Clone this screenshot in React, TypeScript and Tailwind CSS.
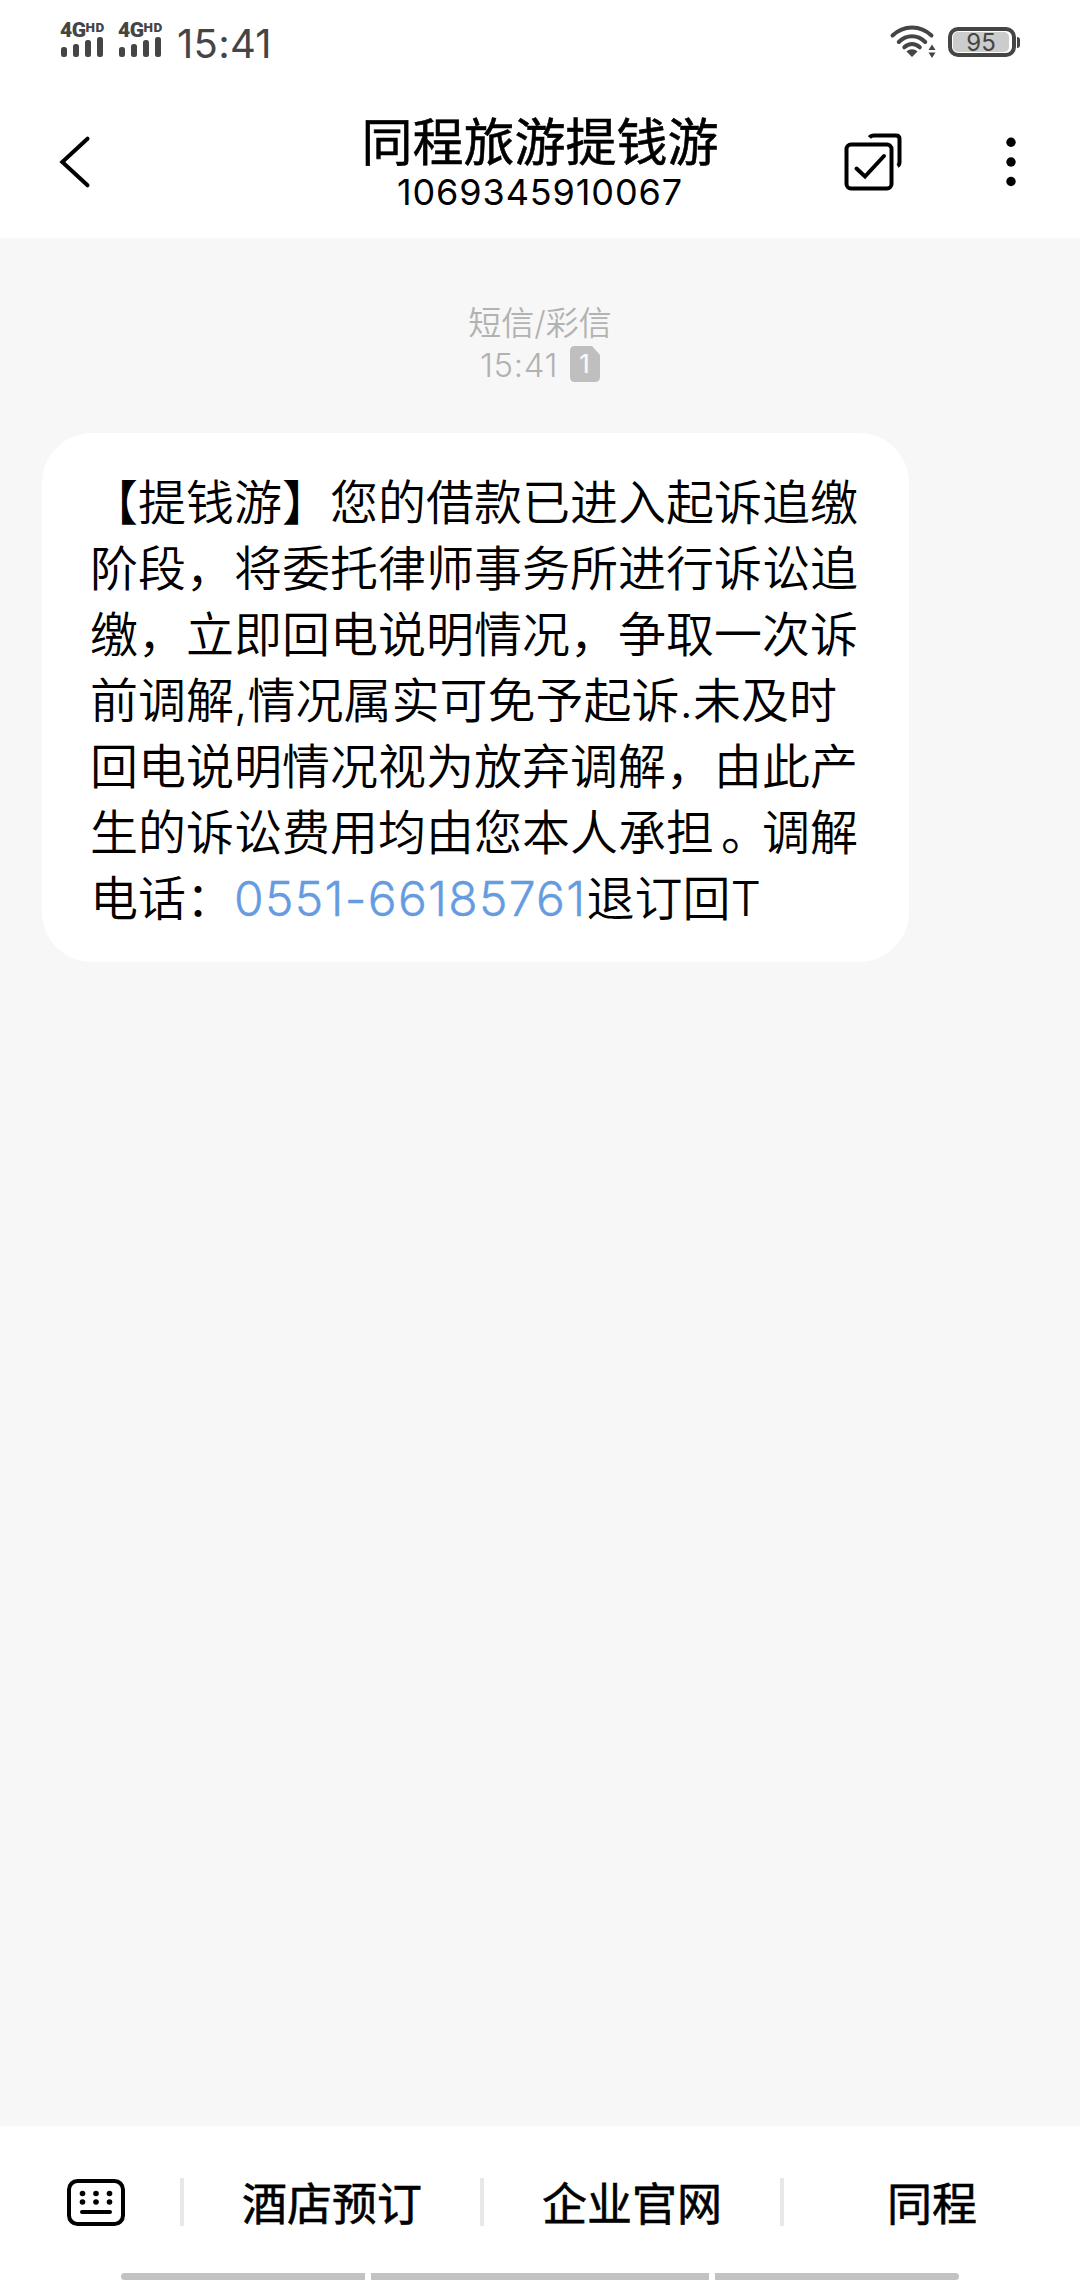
const FONT = "font-['Inter','Noto_Sans_CJK_SC',sans-serif]";

function Signal() {
  return (
    <div className="h-[38px] w-[46px] text-[#454545]">
      <div className="flex h-[17px] items-start whitespace-nowrap font-['Roboto',sans-serif] font-black leading-none">
        <span className="text-[21px] leading-[20px] tracking-[-0.5px]">4G</span>
        <span className="text-[13.5px] leading-[14px] tracking-[0.5px]">HD</span>
      </div>
      <div className="flex h-[20px] items-end gap-[6px] pl-px">
        <i className="h-[10px] w-[6px] rounded-[2.5px] bg-[#454545]" />
        <i className="h-[13px] w-[6px] rounded-[2.5px] bg-[#454545]" />
        <i className="h-[17px] w-[6px] rounded-[2.5px] bg-[#454545]" />
        <i className="h-[20px] w-[6px] rounded-[2.5px] bg-[#454545]" />
      </div>
    </div>
  );
}

function Wifi() {
  return (
    <svg width="48" height="36" viewBox="0 0 48 36" fill="none" stroke="#454545" strokeWidth="4" strokeLinecap="round">
      <path d="M3.5 11.5C14.5 .7 31.500 .7 42.500 11.500" />
      <path d="M9.800 18C17.500 10.300 28.500 10.300 36.200 18" />
      <path d="M15.300 23.300C20 19 26 19 30.800 23.300" />
      <path d="M17.500 27.500C20.500 24.600 25.500 24.600 28.500 27.500L23 33Z" fill="#454545" stroke="none" />
      <path d="M39.500 26L43 20.500L46.500 26ZM39.500 28.500L43 34L46.500 28.500Z" fill="#454545" stroke="none" />
    </svg>
  );
}

function Battery() {
  return (
    <div className="flex items-center">
      <div className="flex h-[30px] w-[68px] items-center rounded-[10px] border-4 border-[#454545] pl-px">
        <div className="flex h-[20px] w-[56px] items-center justify-center rounded-[5px] bg-[#cccccc] pt-px text-[24px] leading-none text-[#454545]">
          95
        </div>
      </div>
      <div className="ml-px h-[11px] w-[3px] rounded-r-[3px] bg-[#454545]" />
    </div>
  );
}

function Header() {
  return (
    <header className="h-[238px] bg-white text-black">
      <div className="flex h-[86px] items-start">
        <div className="ml-[60px] mt-[20px] flex gap-[12px]">
          <Signal />
          <Signal />
        </div>
        <span className="ml-[13px] mt-[20px] text-[40px] font-normal leading-[48px] tracking-[0.3px] text-[#454545]">15:41</span>
        <div className="ml-auto mr-[60px] mt-[24px] flex">
          <Wifi />
          <div className="ml-[11px] mt-[3px]">
            <Battery />
          </div>
        </div>
      </div>
      <div className="grid h-[152px] grid-cols-[360px_360px_360px]">
        <svg width="200" height="152" viewBox="0 86 200 152" fill="none" stroke="black" strokeWidth="4" strokeLinecap="round">
          <path d="M87.500 138.700L62.300 162L87.500 185.300" />
        </svg>
        <div className="flex flex-col items-center whitespace-nowrap">
          <h1 className="mt-[24px] text-[51px] font-normal leading-[66px] [-webkit-text-stroke:0.6px_black]">同程旅游提钱游</h1>
          <p className="-mt-[4px] text-[36px] leading-[40px] tracking-[0.9px]">1069345910067</p>
        </div>
        <svg width="360" height="152" viewBox="720 86 360 152" fill="none" stroke="black" strokeWidth="4">
          <rect x="846.500" y="144.500" width="45" height="44" rx="4.500" />
          <path d="M869.500 137.500Q871 135.500 874 135.500H896Q899.500 135.500 899.500 139V162Q899.500 165 897.500 166" />
          <path d="M856.500 168.500L865 176.500L884 156" strokeLinecap="round" />
          <g fill="black" stroke="none">
            <circle cx="1011" cy="142.300" r="4.700" />
            <circle cx="1011" cy="162" r="4.700" />
            <circle cx="1011" cy="181.500" r="4.700" />
          </g>
        </svg>
      </div>
    </header>
  );
}

const LINES = [
  "【提钱游】您的借款已进入起诉追缴",
  "阶段，将委托律师事务所进行诉讼追",
  "缴，立即回电说明情况，争取一次诉",
  "前调解,情况属实可免予起诉.未及时",
  "回电说明情况视为放弃调解，由此产",
];

function Bubble() {
  return (
    <div className="ml-[42px] mt-[50px] h-[529px] w-[867px] rounded-[50px] bg-white pl-[48px] pt-[37px] text-[48px] font-[350] leading-[66px] text-black">
      {LINES.map((line) => (
        <p key={line} className="whitespace-nowrap">
          {line}
        </p>
      ))}
      <p className="whitespace-nowrap">
        生的诉讼费用均由您本人承担
        <span className="ml-[7px] mr-[17px] [font-feature-settings:'halt']">。</span>
        调解
      </p>
      <p className="whitespace-nowrap">
        电话：<span className="tracking-[1.3px] text-[#659be0] [-webkit-text-stroke:0.4px_#659be0]">0551-66185761</span>退订回T
      </p>
    </div>
  );
}

function Keyboard() {
  return (
    <svg width="60" height="48" viewBox="0 0 60 48" fill="none" stroke="black" strokeWidth="4">
      <rect x="3" y="3" width="54" height="43" rx="8.500" />
      <path d="M16 34H44" strokeLinecap="round" />
      <g fill="black" stroke="none">
        <circle cx="16.500" cy="15.500" r="2.800" />
        <circle cx="30" cy="15.500" r="2.800" />
        <circle cx="43.500" cy="15.500" r="2.800" />
        <circle cx="16.500" cy="24" r="2.800" />
        <circle cx="30" cy="24" r="2.800" />
        <circle cx="43.500" cy="24" r="2.800" />
      </g>
    </svg>
  );
}

function Footer() {
  return (
    <footer className="flex h-[154px] flex-col justify-between bg-white">
      <div className="mt-[52px] flex h-[48px] items-center text-[45px] font-normal leading-[54px] text-black [-webkit-text-stroke:0.6px_black]">
        <div className="flex w-[180px] pl-[66px]">
          <Keyboard />
        </div>
        {["酒店预订", "企业官网", "同程"].map((label) => (
          <div key={label} className="flex h-[48px] w-[300px] border-l-4 border-[#e8e8e8]">
            <span className="flex-1 text-center">{label}</span>
          </div>
        ))}
      </div>
      <div className="flex h-[7px] gap-[6px] pl-[121px]">
        <div className="w-[244px] rounded-l-full bg-[#c2c2c2]" />
        <div className="w-[338px] bg-[#c2c2c2]" />
        <div className="w-[244px] rounded-r-full bg-[#c2c2c2]" />
      </div>
    </footer>
  );
}

export default function App() {
  return (
    <div lang="zh-CN" className={"flex h-[2280px] w-[1080px] flex-col overflow-hidden bg-[#f7f7f7] " + FONT}>
      <Header />
      <main className="flex-1">
        <div className="flex flex-col items-center pt-[64px] text-[33px] font-[350] text-[#b2b2b2]">
          <p className="leading-[42px]">短信/彩信</p>
          <div className="flex h-[39px] items-center gap-[12px]">
            <span className="pt-[2px] leading-[40px] tracking-[0.6px]">15:41</span>
            <svg width="30" height="36" viewBox="0 0 30 36">
              <path d="M5 0H22L30 9V31Q30 36 25 36H5Q0 36 0 31V5Q0 0 5 0Z" fill="#bfbfbf" />
              <text x="14.500" y="27" textAnchor="middle" fontSize="25" fontWeight="500" fill="#f7f7f7">
                1
              </text>
            </svg>
          </div>
        </div>
        <Bubble />
      </main>
      <Footer />
    </div>
  );
}
